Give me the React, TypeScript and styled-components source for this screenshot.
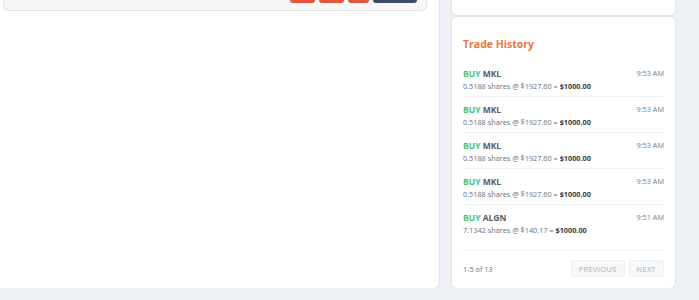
import React from 'react';
import styled, { createGlobalStyle } from 'styled-components';

const GlobalStyle = createGlobalStyle`
  html, body {
    margin: 0;
    padding: 0;
    background: #edf0f5;
    font-family: "Open Sans", "Liberation Sans", sans-serif;
    overflow: hidden;
  }
`;

interface Trade {
  side: string;
  symbol: string;
  shares: string;
  price: string;
  total: string;
  time: string;
}

const trades: Trade[] = [
  { side: 'BUY', symbol: 'MKL', shares: '0.5188', price: '$1927.60', total: '$1000.00', time: '9:53 AM' },
  { side: 'BUY', symbol: 'MKL', shares: '0.5188', price: '$1927.60', total: '$1000.00', time: '9:53 AM' },
  { side: 'BUY', symbol: 'MKL', shares: '0.5188', price: '$1927.60', total: '$1000.00', time: '9:53 AM' },
  { side: 'BUY', symbol: 'MKL', shares: '0.5188', price: '$1927.60', total: '$1000.00', time: '9:53 AM' },
  { side: 'BUY', symbol: 'ALGN', shares: '7.1342', price: '$140.17', total: '$1000.00', time: '9:51 AM' },
];

const App: React.FC = () => {
  return (
    <>
      <GlobalStyle />
      <Page>
        <MainPanel>
          <OrderCard>
            <ButtonRow>
              <ActionButton $tone="red" $w={25} />
              <ActionButton $tone="red" $w={25} />
              <ActionButton $tone="red" $w={21} />
              <ActionButton $tone="navy" $w={44} />
            </ButtonRow>
          </OrderCard>
        </MainPanel>

        <SideColumn>
          <TopCard />
          <HistoryCard>
            <Title>Trade History</Title>
            <TradeList>
              {trades.map((t, i) => (
                <TradeRow key={i}>
                  <TradeInfo>
                    <TradeHead>
                      <Side>{t.side}</Side> {t.symbol}
                    </TradeHead>
                    <TradeDetail>
                      {t.shares} shares @ {t.price} = <b>{t.total}</b>
                    </TradeDetail>
                  </TradeInfo>
                  <Time>{t.time}</Time>
                </TradeRow>
              ))}
            </TradeList>
            <Footer>
              <Count>1-5 of 13</Count>
              <Pager>
                <PageButton>Previous</PageButton>
                <PageButton>Next</PageButton>
              </Pager>
            </Footer>
          </HistoryCard>
        </SideColumn>
      </Page>
    </>
  );
};

const Page = styled.div`
  display: flex;
  align-items: flex-start;
  gap: 13px;
  margin: -30px 0 0 -9px;
`;

const MainPanel = styled.div`
  width: 424px;
  height: 318px;
  padding: 0 12px;
  background: #fff;
  border-radius: 0 0 5px 0;
  box-shadow: 0 0 0 1px #e2e5ea, 0 1px 2px rgba(0, 0, 0, 0.06);
  box-sizing: content-box;
`;

const OrderCard = styled.div`
  height: 41px;
  box-sizing: border-box;
  background: #f8f8f8;
  border: 1px solid #e2e2e2;
  border-top: none;
  border-radius: 0 0 6px 6px;
  display: flex;
  justify-content: flex-end;
  padding-right: 9px;
`;

const ButtonRow = styled.div`
  display: flex;
  gap: 4px;
  height: 33px;
`;

const ActionButton = styled.div<{ $tone: 'red' | 'navy'; $w: number }>`
  width: ${p => p.$w}px;
  height: 100%;
  border-radius: 0 0 3px 3px;
  background: ${p => (p.$tone === 'red' ? '#e5553d' : '#3d4b66')};
`;

const SideColumn = styled.div`
  width: 223px;
  display: flex;
  flex-direction: column;
  gap: 2px;
`;

const TopCard = styled.div`
  height: 45px;
  background: #fff;
  border-radius: 0 0 5px 5px;
  box-shadow: 0 0 0 1px #e2e5ea, 0 1px 2px rgba(0, 0, 0, 0.06);
`;

const HistoryCard = styled.div`
  background: #fff;
  border-radius: 5px;
  box-shadow: 0 0 0 1px #e2e5ea, 0 1px 2px rgba(0, 0, 0, 0.06);
  padding: 20px 11px 11px;
`;

const Title = styled.h3`
  margin: 0 0 10px;
  font-size: 10.5px;
  line-height: 14px;
  font-weight: 700;
  color: #e9743f;
`;

const TradeList = styled.div`
  padding-bottom: 10px;
`;

const TradeRow = styled.div`
  display: flex;
  justify-content: space-between;
  align-items: flex-start;
  padding: 6px 0 3px;
  & + & {
    border-top: 1px solid #eceef1;
  }
`;

const TradeInfo = styled.div`
  display: flex;
  flex-direction: column;
`;

const TradeHead = styled.div`
  font-size: 8.5px;
  line-height: 13px;
  font-weight: 700;
  color: #555a60;
`;

const Side = styled.span`
  color: #47c177;
`;

const TradeDetail = styled.div`
  font-size: 7.3px;
  line-height: 13px;
  color: #6b7077;
  b {
    color: #3a3c40;
    font-weight: 700;
  }
`;

const Time = styled.span`
  font-size: 7.3px;
  line-height: 10px;
  color: #777c83;
  margin-top: 1px;
`;

const Footer = styled.div`
  display: flex;
  justify-content: space-between;
  align-items: center;
  border-top: 1px solid #eceef1;
  padding-top: 9px;
`;

const Count = styled.span`
  font-size: 7.3px;
  color: #6b7077;
`;

const Pager = styled.div`
  display: flex;
  gap: 4px;
`;

const PageButton = styled.button`
  height: 17px;
  padding: 0 7px;
  border: 1px solid #eef0f3;
  border-radius: 2px;
  background: #f6f8fa;
  color: #aab0b8;
  font-family: "Open Sans", "Liberation Sans", sans-serif;
  font-size: 7.5px;
  letter-spacing: 0.3px;
  text-transform: uppercase;
  cursor: pointer;
`;

export default App;
